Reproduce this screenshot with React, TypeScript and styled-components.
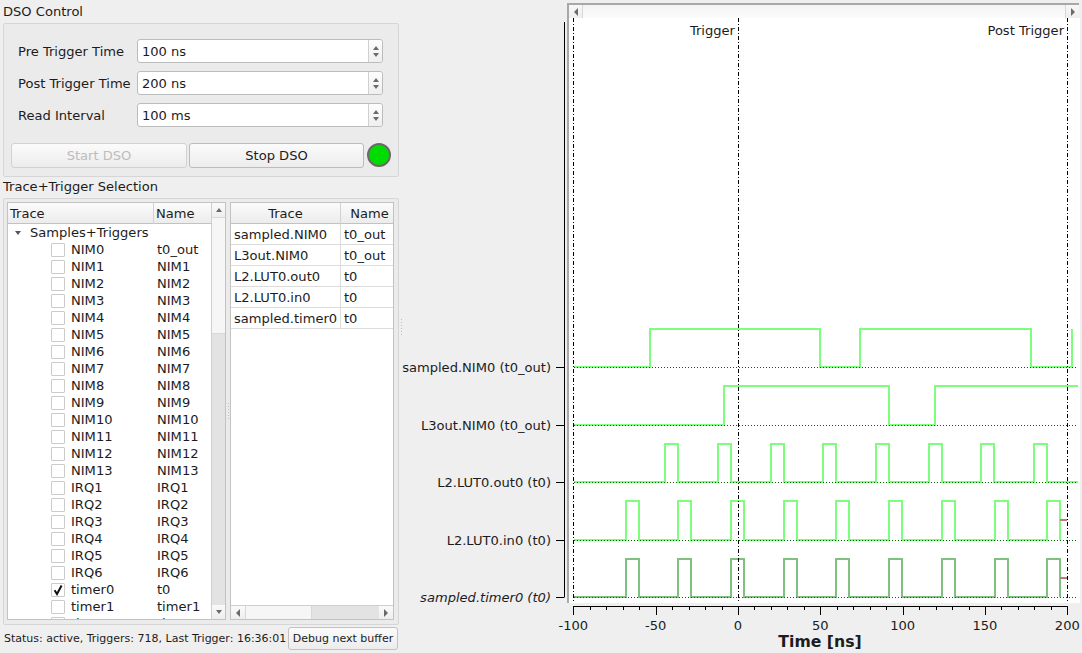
import React from "react";
import styled, { createGlobalStyle } from "styled-components";

const GlobalStyle = createGlobalStyle`
  html, body {
    margin: 0;
    padding: 0;
    background: #efefef;
  }
  * {
    box-sizing: border-box;
  }
`;

const Page = styled.div`
  display: flex;
  width: 1082px;
  height: 653px;
  overflow: hidden;
  background: #efefef;
  color: #1c1c1c;
  font-family: "DejaVu Sans", sans-serif;
  font-size: 13.07px;
`;

const LeftPane = styled.div`
  display: flex;
  flex-direction: column;
  width: 400px;
  flex: none;
  padding: 2px 0 0 2px;
`;

const Heading = styled.div<{ $h: number }>`
  display: flex;
  align-items: center;
  height: ${(p) => p.$h}px;
  padding-left: 1px;
  padding-bottom: 2px;
`;

const Group = styled.section`
  width: 396px;
  margin-left: 1px;
  background: #ebebeb;
  border: 1px solid #d6d6d6;
  border-radius: 2px;
`;

const ControlGroup = styled(Group)`
  height: 154px;
  padding: 15px 6px 0 7px;
`;

const FormGrid = styled.div`
  display: grid;
  grid-template-columns: 119px 246px;
  row-gap: 8px;
  padding-left: 7px;
  align-items: center;
`;

const SpinBox = styled.div`
  display: flex;
  height: 24px;
  background: #fff;
  border: 1px solid #bcbcbc;
  border-radius: 3px;
`;

const SpinValue = styled.div`
  flex: 1;
  padding-left: 4px;
  line-height: 23px;
`;

const SpinButtons = styled.div`
  display: flex;
  flex-direction: column;
  align-items: center;
  justify-content: center;
  gap: 3px;
  width: 14px;
  border-left: 1px solid #d0d0d0;
  background: linear-gradient(#fdfdfd, #efefef);
  border-radius: 0 3px 3px 0;
`;

const Arrow = styled.span<{ $dir: "up" | "down" | "left" | "right"; $color?: string }>`
  display: block;
  width: 0;
  height: 0;
  border-style: solid;
  border-color: transparent;
  ${(p) => {
    const c = p.$color ?? "#6a6a6a";
    switch (p.$dir) {
      case "up":
        return `border-width: 0 3.5px 4px 3.5px; border-bottom-color: ${c};`;
      case "down":
        return `border-width: 4px 3.5px 0 3.5px; border-top-color: ${c};`;
      case "left":
        return `border-width: 4px 4px 4px 0; border-right-color: ${c};`;
      default:
        return `border-width: 4px 0 4px 4px; border-left-color: ${c};`;
    }
  }}
`;

const ButtonRow = styled.div`
  display: flex;
  align-items: flex-start;
  gap: 2px;
  margin-top: 16px;
`;

const PushButton = styled.button<{ $w: number }>`
  width: ${(p) => p.$w}px;
  height: 25px;
  padding: 0;
  font: inherit;
  color: ${(p) => (p.disabled ? "#bdbdbd" : "#1c1c1c")};
  background: linear-gradient(#fbfbfb, #ececec);
  border: 1px solid ${(p) => (p.disabled ? "#d2d2d2" : "#bcbcbc")};
  border-radius: 3px;
`;

const Led = styled.div`
  width: 24px;
  height: 24px;
  margin-left: 1px;
  background: #00dc00;
  border: 2px solid #6a6a6a;
  border-radius: 50%;
`;

const SelectionGroup = styled(Group)`
  display: flex;
  height: 427px;
  padding: 3px 4px 4px 3px;
`;

const ListFrame = styled.div<{ $w: number }>`
  display: flex;
  flex: none;
  width: ${(p) => p.$w}px;
  height: 418px;
  background: #fff;
  border: 1px solid #c2c2c2;
  overflow: hidden;
`;

const TreeColumn = styled.div`
  display: flex;
  flex-direction: column;
  width: 204px;
  overflow: hidden;
`;

const HeaderRow = styled.div<{ $cols: string }>`
  display: grid;
  flex: none;
  grid-template-columns: ${(p) => p.$cols};
  height: 21px;
  background: linear-gradient(#fbfbfb, #ececec);
  border-bottom: 1px solid #c2c2c2;
`;

const HeaderCell = styled.div<{ $center?: boolean; $line?: boolean; $shift?: number }>`
  padding-left: ${(p) => p.$shift ?? (p.$center ? 0 : 2)}px;
  line-height: 21px;
  text-align: ${(p) => (p.$center ? "center" : "left")};
  border-right: ${(p) => (p.$line ? "1px solid #d2d2d2" : "none")};
`;

const TreeRows = styled.div`
  flex: 1;
  overflow: hidden;
`;

const TreeRow = styled.div`
  display: grid;
  grid-template-columns: 146px 1fr;
  height: 17px;
  line-height: 17px;
  white-space: nowrap;
`;

const RootRow = styled.div`
  display: flex;
  align-items: center;
  height: 17px;
  padding-left: 7px;
  gap: 9px;
`;

const TreeName = styled.div`
  display: flex;
  align-items: center;
  padding-left: 43px;
`;

const CheckBox = styled.span`
  display: flex;
  align-items: center;
  justify-content: center;
  flex: none;
  width: 14px;
  height: 14px;
  margin-right: 6px;
  background: #fff;
  border: 1px solid #cbcbcb;
  border-radius: 1px;
`;

const NameCell = styled.div`
  padding-left: 3px;
`;

const VScroll = styled.div`
  display: flex;
  flex-direction: column;
  flex: none;
  width: 14px;
  background: #e3e3e3;
  border-left: 1px solid #cfcfcf;
`;

const ScrollButton = styled.div<{ $size: string }>`
  display: flex;
  flex: none;
  align-items: center;
  justify-content: center;
  width: ${(p) => (p.$size === "h" ? "14px" : "100%")};
  height: ${(p) => (p.$size === "h" ? "100%" : "14px")};
  background: linear-gradient(#fafafa, #eeeeee);
`;

const VHandle = styled.div`
  flex: none;
  height: 117px;
  background: #f6f6f6;
  border-top: 1px solid #d8d8d8;
  border-bottom: 1px solid #d8d8d8;
`;

const Spacer = styled.div`
  flex: 1;
`;

const SplitHandle = styled.div<{ $w: number; $h: number }>`
  flex: none;
  align-self: center;
  width: ${(p) => p.$w}px;
  height: ${(p) => p.$h}px;
  background: repeating-linear-gradient(#bdbdbd 0 1px, transparent 1px 3px) center / 1px 100% no-repeat;
`;

const TableColumn = styled.div`
  display: flex;
  flex-direction: column;
  width: 100%;
`;

const TableRows = styled.div`
  flex: 1;
`;

const TableRow = styled.div`
  display: grid;
  grid-template-columns: 110px 1fr;
  height: 21px;
  line-height: 21px;
  border-bottom: 1px solid #dcdcdc;
`;

const TableCell = styled.div<{ $line?: boolean }>`
  padding-left: 3px;
  white-space: nowrap;
  border-right: ${(p) => (p.$line ? "1px solid #dcdcdc" : "none")};
`;

const HScroll = styled.div`
  display: flex;
  flex: none;
  height: 14px;
  background: #e3e3e3;
  border-top: 1px solid #cfcfcf;
`;

const HHandle = styled.div`
  flex: none;
  width: 67px;
  background: #f6f6f6;
  border-right: 1px solid #d8d8d8;
  border-left: 1px solid #d8d8d8;
`;

const StatusBar = styled.div`
  display: flex;
  align-items: center;
  height: 23px;
  margin-top: 2px;
  padding-left: 2px;
  font-size: 11px;
  white-space: nowrap;
`;

const StatusText = styled.span`
  width: 284px;
  flex: none;
`;

const DebugButton = styled.button`
  width: 110px;
  height: 23px;
  padding: 0;
  font: inherit;
  color: #1c1c1c;
  background: linear-gradient(#fbfbfb, #ececec);
  border: 1px solid #c2c2c2;
  border-radius: 3px;
`;

const PlotPane = styled.div`
  display: flex;
  flex-direction: column;
  flex: none;
  width: 680px;
  padding-top: 3px;
`;

const TimeScroll = styled.div`
  display: flex;
  flex: none;
  width: 512px;
  height: 15px;
  margin-left: 165px;
  background: linear-gradient(#f4f4f4, #fbfbfb);
  border-top: 2px solid #a8a8a8;
  border-left: 2px solid #a8a8a8;
`;

const TimeButton = styled.div<{ $side: "left" | "right" }>`
  display: flex;
  flex: none;
  align-items: center;
  justify-content: center;
  width: 14px;
  margin-left: ${(p) => (p.$side === "left" ? 0 : "auto")};
  background: linear-gradient(#f8f8f8, #eeeeee);
  border-${(p) => (p.$side === "left" ? "right" : "left")}: 1px solid #d8d8d8;
`;

const PlotSvg = styled.svg`
  display: block;
  flex: none;
  font-family: "DejaVu Sans", sans-serif;
  font-size: 13.07px;
  fill: #1c1c1c;
`;

const pulses = (base: number, top: number, edges: number[], end: number) => {
  let d = `M574 ${base}`;
  edges.forEach((x) => {
    d += `H${x}V${top}H${x + 13}V${base}`;
  });
  return `${d}H${end}`;
};

const inEdges = [626, 678, 731, 784, 836, 889, 942, 995, 1047];
const outEdges = [665, 718, 771, 823, 876, 929, 981, 1034];

const TRACES = [
  {
    label: "sampled.NIM0 (t0_out)",
    base: 367,
    d: "M574 367H650V329H820V367H860V329H1031V367H1072V329",
    color: "#7dff7d",
  },
  {
    label: "L3out.NIM0 (t0_out)",
    base: 425,
    d: "M574 425H724V386H889V425H935V386H1078",
    color: "#7dff7d",
  },
  {
    label: "L2.LUT0.out0 (t0)",
    base: 482,
    d: pulses(482, 444, outEdges, 1078),
    color: "#7dff7d",
  },
  {
    label: "L2.LUT0.in0 (t0)",
    base: 540,
    d: pulses(540, 501, inEdges, 1060),
    color: "#7dff7d",
  },
  {
    label: "sampled.timer0 (t0)",
    base: 597,
    d: pulses(597, 559, inEdges, 1060),
    color: "#80c080",
    italic: true,
  },
];

const xOf = (t: number) => 573.3 + ((t + 100) * 494) / 300;

const majorTicks = [-100, -50, 0, 50, 100, 150, 200];
const minorTicks = Array.from({ length: 31 }, (_, i) => -100 + i * 10).filter((t) => t % 50 !== 0);

const Plot = () => (
  <PlotSvg width="680" height="635" viewBox="402 18 680 635">
    <rect x="567" y="18" width="513" height="585" fill="#fff" />
    <rect x="567" y="18" width="2" height="585" fill="#a8a8a8" />
    <path d="M564.5 22V597.5" stroke="#000" fill="none" />

    {TRACES.map((t) => (
      <g key={t.label}>
        <path d={t.d} fill="none" stroke={t.color} strokeWidth="2" />
        <path
          d={`M574 ${t.base + 0.5}H1078`}
          fill="none"
          stroke="#006400"
          strokeWidth="1"
          strokeDasharray="1 2"
        />
        <path d={`M556 ${t.base + 0.5}H564`} stroke="#000" />
        <text x="551" y={t.base + 5} textAnchor="end" fontStyle={t.italic ? "italic" : "normal"}>
          {t.label}
        </text>
      </g>
    ))}

    <path d="M1060 520H1067M1060 578H1067" stroke="#b97f7f" strokeWidth="2" fill="none" />

    {[573.5, 738.5, 1067.5].map((x) => (
      <path key={x} d={`M${x} 18V603`} stroke="#000" fill="none" strokeDasharray="4 2 1 2" />
    ))}

    <text x="735" y="35" textAnchor="end">
      Trigger
    </text>
    <text x="1064" y="35" textAnchor="end">
      Post Trigger
    </text>

    <path d="M573 606.5H1068" stroke="#000" fill="none" />
    {majorTicks.map((t) => (
      <g key={t}>
        <path d={`M${Math.round(xOf(t)) + 0.5} 607V615`} stroke="#000" />
        <text x={xOf(t)} y="630" textAnchor="middle">
          {t}
        </text>
      </g>
    ))}
    {minorTicks.map((t) => (
      <path key={t} d={`M${Math.round(xOf(t)) + 0.5} 607V610`} stroke="#000" />
    ))}
    <text x="820" y="647" textAnchor="middle" fontWeight="bold" fontSize="15.7">
      Time [ns]
    </text>
  </PlotSvg>
);

const CheckMark = () => (
  <svg width="12" height="12" viewBox="0 0 12 12">
    <path d="M2.6 6.2L5 10L9.6 1.6" fill="none" stroke="#111" strokeWidth="2" />
  </svg>
);

const range = (prefix: string, from: number, to: number) =>
  Array.from({ length: to - from + 1 }, (_, i) => `${prefix}${from + i}`);

const TREE_ITEMS: { id: string; name: string; checked?: boolean }[] = [
  { id: "NIM0", name: "t0_out" },
  ...range("NIM", 1, 13).map((id) => ({ id, name: id })),
  ...range("IRQ", 1, 6).map((id) => ({ id, name: id })),
  { id: "timer0", name: "t0", checked: true },
  { id: "timer1", name: "timer1" },
  { id: "timer2", name: "timer2" },
];

const SELECTED = [
  ["sampled.NIM0", "t0_out"],
  ["L3out.NIM0", "t0_out"],
  ["L2.LUT0.out0", "t0"],
  ["L2.LUT0.in0", "t0"],
  ["sampled.timer0", "t0"],
];

const FIELDS = [
  ["Pre Trigger Time", "100 ns"],
  ["Post Trigger Time", "200 ns"],
  ["Read Interval", "100 ms"],
];

export default function App() {
  return (
    <Page>
      <GlobalStyle />
      <LeftPane>
        <Heading $h={21}>DSO Control</Heading>
        <ControlGroup>
          <FormGrid>
            {FIELDS.map(([label, value]) => (
              <React.Fragment key={label}>
                <div>{label}</div>
                <SpinBox>
                  <SpinValue>{value}</SpinValue>
                  <SpinButtons>
                    <Arrow $dir="up" />
                    <Arrow $dir="down" />
                  </SpinButtons>
                </SpinBox>
              </React.Fragment>
            ))}
          </FormGrid>
          <ButtonRow>
            <PushButton $w={176} disabled>
              Start DSO
            </PushButton>
            <PushButton $w={175}>Stop DSO</PushButton>
            <Led />
          </ButtonRow>
        </ControlGroup>
        <Heading $h={21}>Trace+Trigger Selection</Heading>
        <SelectionGroup>
          <ListFrame $w={219}>
            <TreeColumn>
              <HeaderRow $cols="146px 1fr">
                <HeaderCell $line>Trace</HeaderCell>
                <HeaderCell>Name</HeaderCell>
              </HeaderRow>
              <TreeRows>
                <RootRow>
                  <Arrow $dir="down" $color="#555" />
                  Samples+Triggers
                </RootRow>
                {TREE_ITEMS.map((item) => (
                  <TreeRow key={item.id}>
                    <TreeName>
                      <CheckBox>{item.checked && <CheckMark />}</CheckBox>
                      {item.id}
                    </TreeName>
                    <NameCell>{item.name}</NameCell>
                  </TreeRow>
                ))}
              </TreeRows>
            </TreeColumn>
            <VScroll>
              <ScrollButton $size="v">
                <Arrow $dir="up" />
              </ScrollButton>
              <VHandle />
              <Spacer />
              <ScrollButton $size="v">
                <Arrow $dir="down" />
              </ScrollButton>
            </VScroll>
          </ListFrame>
          <SplitHandle $w={4} $h={16} />
          <ListFrame $w={164}>
            <TableColumn>
              <HeaderRow $cols="110px 1fr">
                <HeaderCell $center $line>
                  Trace
                </HeaderCell>
                <HeaderCell $center $shift={5}>
                  Name
                </HeaderCell>
              </HeaderRow>
              <TableRows>
                {SELECTED.map(([trace, name]) => (
                  <TableRow key={trace}>
                    <TableCell $line>{trace}</TableCell>
                    <TableCell>{name}</TableCell>
                  </TableRow>
                ))}
              </TableRows>
              <HScroll>
                <ScrollButton $size="h">
                  <Arrow $dir="left" />
                </ScrollButton>
                <HHandle />
                <Spacer />
                <ScrollButton $size="h">
                  <Arrow $dir="right" />
                </ScrollButton>
              </HScroll>
            </TableColumn>
          </ListFrame>
        </SelectionGroup>
        <StatusBar>
          <StatusText>Status: active, Triggers: 718, Last Trigger: 16:36:01</StatusText>
          <DebugButton>Debug next buffer</DebugButton>
        </StatusBar>
      </LeftPane>
      <SplitHandle $w={2} $h={16} />
      <PlotPane>
        <TimeScroll>
          <TimeButton $side="left">
            <Arrow $dir="left" />
          </TimeButton>
          <TimeButton $side="right">
            <Arrow $dir="right" />
          </TimeButton>
        </TimeScroll>
        <Plot />
      </PlotPane>
    </Page>
  );
}
